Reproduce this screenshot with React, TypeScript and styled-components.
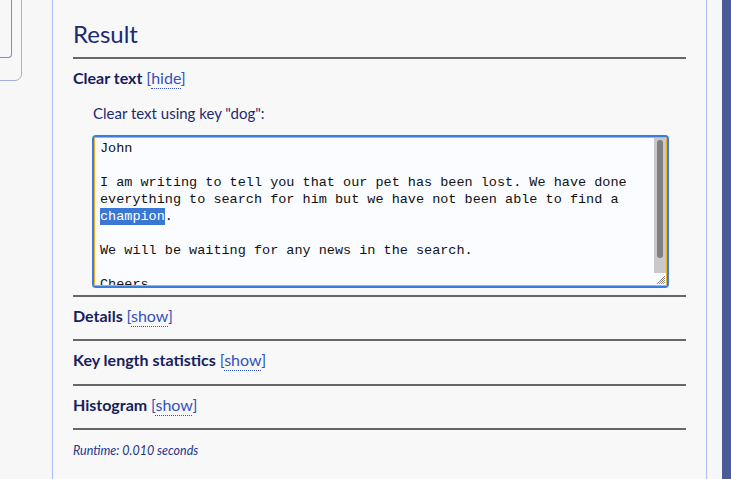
import React, { useEffect, useRef } from "react";
import styled, { createGlobalStyle } from "styled-components";

const Global = createGlobalStyle`
  html, body { margin: 0; padding: 0; }
  body {
    background: #f7f7f7;
    overflow: hidden;
    font-family: Lato, "Noto Sans", sans-serif;
  }
`;

const Page = styled.div`
  display: flex;
  width: 731px;
  height: 479px;
  overflow: hidden;
  background: #f7f7f7;
`;

const Sidebar = styled.div`
  width: 52px;
  flex: none;
  display: flex;
  flex-direction: column;
`;

const SideCard = styled.div`
  margin-left: -19px;
  margin-top: -20px;
  width: 39px;
  height: 99px;
  border: 1px solid #a3aedc;
  border-radius: 0 0 7px 0;
  display: flex;
  flex-direction: column;
`;

const SideInner = styled.div`
  width: 29px;
  height: 76px;
  border-bottom: 1px solid #7d8cc6;
  border-right: 1px solid #7d8cc6;
  border-radius: 0 0 4px 0;
`;

const Panel = styled.main`
  width: 613px;
  flex: none;
  border-left: 1px solid #aabdf0;
  border-right: 1px solid #aabdf0;
  padding: 0 20px;
  background: #f8f8f8;
`;

const Gap = styled.div`
  width: 15px;
  flex: none;
`;

const Stripe = styled.div`
  flex: 1;
  background: #4b5b97;
`;

const Heading = styled.h2`
  margin: 0;
  padding-top: 19px;
  padding-bottom: 8px;
  font-size: 24px;
  line-height: 30px;
  font-weight: 400;
  color: #1b2a72;
  border-bottom: 2px solid #676767;
`;

const Section = styled.section`
  border-bottom: 2px solid #676767;
`;

const SectionTitle = styled.div`
  padding: 7px 0 11.5px;
  font-size: 16px;
  line-height: 24px;
  font-weight: 700;
  color: #15215c;
`;

const Toggle = styled.span`
  font-weight: 400;
  color: #3352b8;
`;

const ToggleWord = styled.span`
  border-bottom: 1px dotted #3352b8;
  padding-bottom: 1px;
`;

const Body = styled.div`
  padding-left: 19px;
`;

const Label = styled.div`
  padding-left: 1px;
  font-size: 15px;
  line-height: 22px;
  color: #1b2a72;
  margin-bottom: 11px;
`;

const Frame = styled.div`
  width: 577px;
  height: 153px;
  box-sizing: border-box;
  border: 2px solid #3b7ddd;
  border-radius: 4px;
  margin-bottom: 7px;
`;

const FrameInner = styled.div`
  height: 100%;
  box-sizing: border-box;
  border: 1px solid #f2ae1b;
  border-radius: 2px;
  background: #fbfcff;
  display: flex;
  overflow: hidden;
`;

const TextBox = styled.textarea`
  flex: 1;
  min-width: 0;
  display: block;
  box-sizing: border-box;
  margin: 0;
  padding: 2.5px 4px 0 5px;
  border: none;
  outline: none;
  background: transparent;
  color: #111;
  font-family: "Liberation Mono", "Courier New", monospace;
  font-size: 13.5px;
  line-height: 17px;
  resize: none;
  overflow: hidden;

  &::selection {
    background: #3a76d4;
    color: #ffffff;
  }
`;

const ScrollCol = styled.div`
  width: 12px;
  flex: none;
  display: flex;
  flex-direction: column;
`;

const Track = styled.div`
  flex: 1;
  background: #c9c9c9;
  padding: 2px 3px 0;
`;

const Thumb = styled.div`
  height: 118px;
  border-radius: 4px;
  background: #7f7f7f;
`;

const Resizer = styled.div`
  height: 12px;
  display: flex;
  background: #fbfcff;
`;

const Runtime = styled.div`
  padding-top: 13px;
  font-size: 12.5px;
  font-style: italic;
  color: #24348a;
`;

const text =
  "John\n\nI am writing to tell you that our pet has been lost. We have done everything to search for him but we have not been able to find a champion.\n\nWe will be waiting for any news in the search.\n\nCheers\nMary";

function Toggler({ word }: { word: string }) {
  return (
    <Toggle>
      [<ToggleWord>{word}</ToggleWord>]
    </Toggle>
  );
}

export default function App() {
  const ref = useRef<HTMLTextAreaElement>(null);
  useEffect(() => {
    const el = ref.current;
    if (!el) return;
    const start = text.indexOf("champion");
    el.focus();
    el.setSelectionRange(start, start + "champion".length);
    el.scrollTop = 0;
  }, []);
  return (
    <>
      <Global />
      <Page>
        <Sidebar>
          <SideCard>
            <SideInner />
          </SideCard>
        </Sidebar>
        <Panel>
          <Heading>Result</Heading>
          <Section>
            <SectionTitle>
              Clear text <Toggler word="hide" />
            </SectionTitle>
            <Body>
              <Label>Clear text using key "dog":</Label>
              <Frame>
                <FrameInner>
                  <TextBox ref={ref} defaultValue={text} spellCheck={false} />
                  <ScrollCol>
                    <Track>
                      <Thumb />
                    </Track>
                    <Resizer>
                      <svg width="12" height="12" viewBox="0 0 12 12">
                        <path
                          d="M11 3 L3 11 M11 5 L5 11 M11 7 L7 11 M11 9 L9 11"
                          stroke="#8a8a8a"
                          strokeWidth="1"
                        />
                      </svg>
                    </Resizer>
                  </ScrollCol>
                </FrameInner>
              </Frame>
            </Body>
          </Section>
          <Section>
            <SectionTitle>
              Details <Toggler word="show" />
            </SectionTitle>
          </Section>
          <Section>
            <SectionTitle>
              Key length statistics <Toggler word="show" />
            </SectionTitle>
          </Section>
          <Section>
            <SectionTitle>
              Histogram <Toggler word="show" />
            </SectionTitle>
          </Section>
          <Runtime>Runtime: 0.010 seconds</Runtime>
        </Panel>
        <Gap />
        <Stripe />
      </Page>
    </>
  );
}
